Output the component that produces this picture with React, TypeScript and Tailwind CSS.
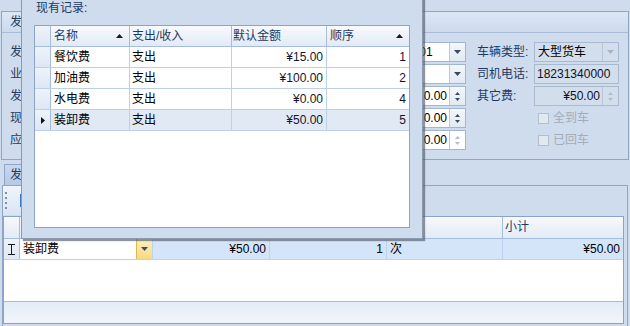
import React from "react";

// Windows-Forms style "cost type" picker: a drop-down grid that lies over
// the shipping form and its detail grid.

const font = "font-['Liberation_Sans','Noto_Sans_CJK_SC',sans-serif] text-[12px]";

function DownArrow({ c = "#2f3f55" }: { c?: string }) {
  return (
    <svg width="7" height="4" viewBox="0 0 7 4">
      <path d="M0 0h7L3.5 4z" fill={c} />
    </svg>
  );
}

function UpTri({ c = "#1b1b1b" }: { c?: string }) {
  return (
    <svg width="7" height="4" viewBox="0 0 7 4">
      <path d="M3.5 0L7 4H0z" fill={c} />
    </svg>
  );
}

function Spin({ c = "#3d4b60" }: { c?: string }) {
  return (
    <div className="flex flex-col items-center gap-[3px]">
      <svg width="5" height="3" viewBox="0 0 5 3">
        <path d="M2.5 0L5 3H0z" fill={c} />
      </svg>
      <svg width="5" height="3" viewBox="0 0 5 3">
        <path d="M0 0h5L2.5 3z" fill={c} />
      </svg>
    </div>
  );
}

function Combo({ value = "", w, disabled }: { value?: string; w: string; disabled?: boolean }) {
  return (
    <div className={`${w} h-[20px] flex border ${disabled ? "border-[#a9b9ce] bg-[#d3deed]" : "border-[#a3b6d0] bg-white"}`}>
      <div className="flex-1 pl-[3px] leading-[18px] overflow-hidden whitespace-nowrap">{value}</div>
      <div className={`w-[16px] flex items-center justify-center border-l ${disabled ? "border-[#b9c6d7] bg-[#d3deed]" : "border-[#b8c8dd] bg-gradient-to-b from-[#f4f7fb] to-[#e2e9f3]"}`}>
        <DownArrow c={disabled ? "#a9b4c3" : "#3a4a60"} />
      </div>
    </div>
  );
}

function Numeric({ value, w, disabled, white }: { value: string; w: string; disabled?: boolean; white?: boolean }) {
  return (
    <div className={`${w} h-[20px] flex border ${white ? "bg-white border-[#a3b6d0]" : "bg-[#d3deed] border-[#a9b9ce]"}`}>
      <div className="flex-1 pr-[2px] text-right leading-[18px] whitespace-nowrap overflow-hidden">{value}</div>
      <div className={`w-[16px] flex items-center justify-center border-l ${white && !disabled ? "border-[#b8c8dd] bg-gradient-to-b from-[#f4f7fb] to-[#e2e9f3]" : "border-[#b9c6d7]"}`}>
        <Spin c={disabled ? "#b3bdca" : "#3d4b60"} />
      </div>
    </div>
  );
}

function Check({ label }: { label: string }) {
  return (
    <div className="flex items-center gap-[4px] pl-[61px] text-[#a3acb8]">
      <div className="w-[11px] h-[11px] border border-[#b4bfcc] bg-[#e2e8f0]" />
      <span>{label}</span>
    </div>
  );
}

const leftRows = [
  { a: "发货号:", b: "类型:", c: "编号:", cv: "0001", kind: "combo" },
  { a: "业务员:", b: "结算:", c: "客户:", cv: "", kind: "combo" },
  { a: "发货日:", b: "运费:", c: "装卸:", cv: "0.00", kind: "num" },
  { a: "现付:", b: "回付:", c: "到付:", cv: "0.00", kind: "num" },
  { a: "应收:", b: "已收:", c: "欠款:", cv: "0.00", kind: "numoff" },
];

function FormGroup() {
  return (
    <div className="mx-[1px] mt-[11px] h-[149px] border border-[#8ea6c8]">
      <div className="h-[21px] pl-[8px] leading-[20px] text-[#1e3a5f] border-b border-[#a9bdd9] bg-gradient-to-b from-[#dce7f6] to-[#ccdaed]">
        发货信息
      </div>
      <div className="flex pl-[8px] pt-[9px]">
        <div className="w-[456px] flex flex-col gap-[2px]">
          {leftRows.map((r, i) => (
            <div key={i} className="flex h-[20px] items-center whitespace-nowrap">
              <span className="w-[56px] text-[#1e3a5f]">{r.a}</span>
              <Combo w="w-[136px]" />
              <span className="ml-[8px] w-[56px] text-[#1e3a5f]">{r.b}</span>
              <Combo w="w-[80px]" />
              <span className="ml-[8px] w-[48px] text-[#1e3a5f]">{r.c}</span>
              {r.kind === "combo" ? (
                <Combo w="w-[64px]" value={r.cv} />
              ) : (
                <Numeric w="w-[64px]" value={r.cv} white disabled={r.kind === "numoff"} />
              )}
            </div>
          ))}
        </div>
        <div className="ml-[11px] flex flex-col gap-[2px] text-[#1e3a5f]">
          <div className="flex h-[20px] items-center">
            <span className="w-[57px]">车辆类型:</span>
            <div className="text-black">
              <Combo w="w-[85px]" value="大型货车" disabled />
            </div>
          </div>
          <div className="flex h-[20px] items-center">
            <span className="w-[57px]">司机电话:</span>
            <div className="w-[85px] h-[20px] border border-[#a9b9ce] bg-[#d3deed] pl-[2px] leading-[18px] text-[#101028]">18231340000</div>
          </div>
          <div className="flex h-[20px] items-center">
            <span className="w-[57px]">其它费:</span>
            <div className="text-[#101028]">
              <Numeric w="w-[85px]" value="¥50.00" disabled />
            </div>
          </div>
          <div className="flex h-[20px] items-center">
            <Check label="全到车" />
          </div>
          <div className="flex h-[20px] items-center">
            <Check label="已回车" />
          </div>
        </div>
      </div>
    </div>
  );
}

function IBeam() {
  return (
    <svg width="7" height="11" viewBox="0 0 7 11">
      <path d="M0 0.5h7M0 10.5h7M3.5 0.5v10" stroke="#1b1b1b" strokeWidth="1" fill="none" />
    </svg>
  );
}

const detailCols = [
  { t: "费用名称", w: "w-[133px]" },
  { t: "单价", w: "w-[117px]" },
  { t: "数量", w: "w-[117px]" },
  { t: "单位", w: "w-[116px]" },
];

function DetailTab() {
  return (
    <div className="mt-[4px]">
      <div className="ml-[4px] w-[64px] h-[21px] border border-b-0 border-[#8ea6c8] bg-gradient-to-b from-[#c9d8ee] to-[#b5c9e5] pl-[5px] leading-[20px] text-[#1e3a5f]">
        发货明细
      </div>
      <div className="mx-[2px] h-[142px] border border-[#8ea6c8] pr-[3px]">
        <div className="h-[29px] w-[190px] flex items-center gap-[8px] pl-[1px] bg-gradient-to-b from-[#f0f5fb] to-[#d9e4f3]">
          <div className="grid grid-cols-1 gap-[3px] pl-[1px]">
            <div className="w-[2px] h-[2px] bg-[#7d8fa8]" />
            <div className="w-[2px] h-[2px] bg-[#7d8fa8]" />
            <div className="w-[2px] h-[2px] bg-[#7d8fa8]" />
            <div className="w-[2px] h-[2px] bg-[#7d8fa8]" />
          </div>
          <div className="ml-[5px] w-[11px] h-[13px] border-2 border-[#3d78c8] bg-white" />
        </div>
        <div className="mt-[1px] h-[108px] border border-[#8aa4c8] bg-white flex flex-col">
          <div className="h-[22px] flex border-b border-[#a5bcdb] bg-gradient-to-b from-[#f7f9fc] to-[#e3ebf6] text-[#1e3a5f]">
            <div className="w-[16px] border-r border-[#a5bcdb]" />
            {detailCols.map((c) => (
              <div key={c.t} className={`${c.w} border-r border-[#a5bcdb] pl-[2px] leading-[21px]`}>{c.t}</div>
            ))}
            <div className="flex-1 pl-[2px] leading-[21px]">小计</div>
          </div>
          <div className="h-[21px] flex border-b border-[#bcd2ee] bg-[#d4e4f9] text-black">
            <div className="w-[16px] flex items-center justify-center border-r border-[#a5bcdb] bg-gradient-to-b from-[#eef3fa] to-[#dfe8f5]">
              <IBeam />
            </div>
            <div className="w-[133px] flex bg-white border-r border-[#bcd2ee]">
              <div className="flex-1 pl-[3px] leading-[20px]">装卸费</div>
              <div className="w-[16px] flex items-center justify-center border-l border-[#e0b84e] bg-gradient-to-b from-[#fdf1c0] to-[#f7d980]">
                <DownArrow c="#4a4a5a" />
              </div>
            </div>
            <div className="w-[117px] pr-[3px] text-right leading-[20px] border-r border-[#bcd2ee]">¥50.00</div>
            <div className="w-[117px] pr-[3px] text-right leading-[20px] border-r border-[#bcd2ee]">1</div>
            <div className="w-[116px] pl-[3px] leading-[20px] border-r border-[#bcd2ee]">次</div>
            <div className="flex-1 pr-[3px] text-right leading-[20px]">¥50.00</div>
          </div>
          <div className="flex-1" />
          <div className="h-[22px] border-t border-[#a5bcdb] bg-gradient-to-b from-[#e2ebf7] to-[#f2f6fb]" />
        </div>
      </div>
    </div>
  );
}

const records = [
  { name: "餐饮费", kind: "支出", amt: "¥15.00", seq: 1 },
  { name: "加油费", kind: "支出", amt: "¥100.00", seq: 2 },
  { name: "水电费", kind: "支出", amt: "¥0.00", seq: 4 },
  { name: "装卸费", kind: "支出", amt: "¥50.00", seq: 5 },
];

function RecordPopup() {
  return (
    <div className="absolute left-[21px] top-[-12px] w-[402px] h-[251px] border border-[#8d9aae] bg-[#cfdcee] shadow-[2px_2px_1px_rgba(70,78,92,0.6)]">
      <div className="pl-[14px] pt-[12px] leading-[14px] text-[#1e3a5f]">现有记录:</div>
      <div className="ml-[12px] mt-[10px] w-[376px] h-[203px] border border-[#8aa4c8] bg-white">
        <div className="h-[21px] flex border-b border-[#a5bcdb] bg-gradient-to-b from-[#f8fafd] to-[#e2eaf6] text-[#1e3a5f]">
          <div className="w-[16px] border-r border-[#a5bcdb] bg-gradient-to-b from-[#eef3fa] to-[#dde7f4]" />
          <div className="w-[79px] flex items-center border-r border-[#a5bcdb] pl-[3px] pr-[6px]">
            <span className="flex-1">名称</span>
            <UpTri />
          </div>
          <div className="w-[102px] border-r border-[#a5bcdb] pl-[2px] leading-[20px]">支出/收入</div>
          <div className="w-[95px] border-r border-[#a5bcdb] pl-[1px] leading-[20px]">默认金额</div>
          <div className="flex-1 flex items-center pl-[3px] pr-[6px]">
            <span className="flex-1">顺序</span>
            <UpTri />
          </div>
        </div>
        {records.map((r, i) => {
          const sel = i === records.length - 1;
          return (
            <div key={r.name} className={`h-[21px] flex border-b border-[#bcd0ea] ${sel ? "bg-[#e1e9f5]" : "bg-white"} text-black`}>
              <div className="w-[16px] flex items-center justify-center border-r border-[#a5bcdb] bg-gradient-to-b from-[#eef3fa] to-[#dde7f4]">
                {sel && (
                  <svg width="4" height="7" viewBox="0 0 4 7">
                    <path d="M0 0L4 3.5L0 7z" fill="#111" />
                  </svg>
                )}
              </div>
              <div className="w-[79px] border-r border-[#bcd0ea] pl-[3px] leading-[20px]">{r.name}</div>
              <div className="w-[102px] border-r border-[#bcd0ea] pl-[2px] leading-[20px]">{r.kind}</div>
              <div className="w-[95px] border-r border-[#bcd0ea] pr-[3px] text-right leading-[20px] text-[#14142e]">{r.amt}</div>
              <div className="flex-1 pr-[3px] text-right leading-[20px] text-[#14142e]">{r.seq}</div>
            </div>
          );
        })}
      </div>
    </div>
  );
}

export default function App() {
  return (
    <div className={`relative w-[630px] h-[326px] overflow-hidden bg-[#cfdcee] ${font}`}>
      <FormGroup />
      <DetailTab />
      <RecordPopup />
    </div>
  );
}
